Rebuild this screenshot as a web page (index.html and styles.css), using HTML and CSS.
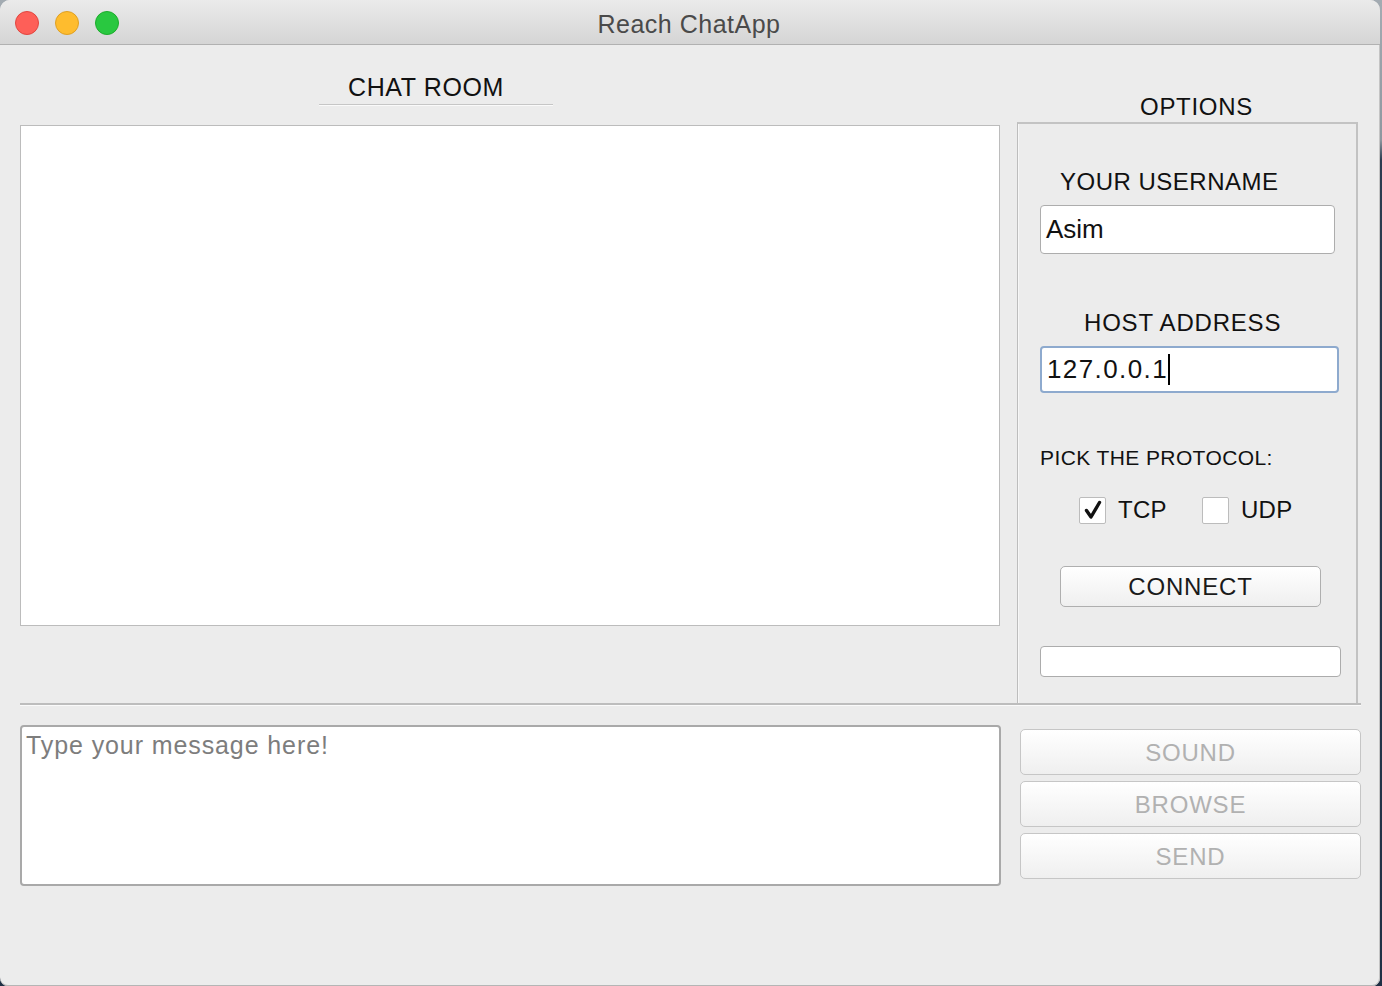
FILE: index.html
```html
<!DOCTYPE html>
<html>
<head>
<meta charset="utf-8">
<link rel="stylesheet" href="styles.css">
<title>Reach ChatApp</title>
</head>
<body>
<div class="window">
  <div class="titlebar">
    <div class="lights">
      <span class="light red"></span>
      <span class="light yellow"></span>
      <span class="light green"></span>
    </div>
    <div class="title">Reach ChatApp</div>
  </div>
  <div class="content">
    <div class="top">
      <div class="chat-col">
        <div class="chat-head"><span>CHAT ROOM</span></div>
        <div class="chat-box"></div>
      </div>
      <div class="opt-col">
        <div class="opt-head">OPTIONS</div>
        <div class="opt-panel">
          <div class="label lbl-user">YOUR USERNAME</div>
          <div class="field user-field">Asim</div>
          <div class="label lbl-host">HOST ADDRESS</div>
          <div class="field host-field">127.0.0.1<span class="caret"></span></div>
          <div class="label-sm">PICK THE PROTOCOL:</div>
          <div class="protos">
            <label class="proto"><span class="cb checked"><svg width="20" height="20" viewBox="0 0 20 20"><path d="M3.5 10.5 L8 17 L16.5 2.5" fill="none" stroke="#111" stroke-width="3.4" stroke-linejoin="round" stroke-linecap="round"/></svg></span>TCP</label>
            <label class="proto"><span class="cb"></span>UDP</label>
          </div>
          <button class="btn connect">CONNECT</button>
          <div class="status"></div>
        </div>
      </div>
    </div>
    <div class="separator"></div>
    <div class="bottom">
      <div class="msg">Type your message here!</div>
      <div class="actions">
        <button class="btn dis">SOUND</button>
        <button class="btn dis">BROWSE</button>
        <button class="btn dis">SEND</button>
      </div>
    </div>
  </div>
</div>
</body>
</html>
```
FILE: styles.css
```css
* { box-sizing: border-box; }
html, body {
  margin: 0;
  padding: 0;
  height: 986px;
  overflow: hidden;
}
body {
  background: linear-gradient(#a3abb2 0, #8e979f 140px, #2b3c50 160px, #1f3045 100%);
  font-family: "Liberation Sans", Arial, sans-serif;
  color: #111;
}
.window {
  width: 1380px;
  height: 986px;
  background: #ececec;
  border-radius: 10px 10px 8px 8px;
  overflow: hidden;
  display: flex;
  flex-direction: column;
  box-shadow: inset -1px 0 0 #c4c4c4, inset 0 -1px 0 #b5b5b5;
}
.titlebar {
  height: 45px;
  flex: none;
  background: linear-gradient(#ebebeb, #d5d5d5);
  border-bottom: 1px solid #b1b1b1;
  position: relative;
  display: flex;
  align-items: center;
  justify-content: center;
}
.lights {
  position: absolute;
  left: 15px;
  top: 11px;
  display: flex;
  gap: 16px;
}
.light {
  width: 24px;
  height: 24px;
  border-radius: 50%;
  display: block;
}
.red { background: #fe5f58; border: 1px solid #e1463f; }
.yellow { background: #febc2e; border: 1px solid #dfa023; }
.green { background: #29c840; border: 1px solid #1dac2c; }
.title {
  font-size: 25px;
  color: #4a4a4a;
  margin-left: -2px;
  margin-top: 4px;
  letter-spacing: 0.5px;
}
.content {
  padding-left: 20px;
  display: flex;
  flex-direction: column;
}
.top {
  display: flex;
  height: 658px;
}
.chat-col {
  width: 980px;
  display: flex;
  flex-direction: column;
}
.chat-head {
  margin-top: 25px;
  margin-left: 299px;
  width: 234px;
  height: 35px;
  padding-right: 20px;
  text-align: center;
  border-bottom: 1px solid #c6c6c6;
  box-shadow: 0 1px 0 #fafafa;
  font-size: 25px;
  line-height: 34px;
  letter-spacing: 0.6px;
}
.chat-box {
  margin-top: 20px;
  height: 501px;
  background: #fff;
  border: 1px solid #bcbcbc;
}
.opt-col {
  margin-left: 17px;
  width: 343px;
  display: flex;
  flex-direction: column;
}
.opt-head {
  height: 77px;
  padding-left: 16px;
  display: flex;
  align-items: flex-end;
  justify-content: center;
  font-size: 24px;
  line-height: 30px;
  letter-spacing: 0.7px;
}
.opt-panel {
  flex: 1;
  width: 341px;
  border-top: 2px solid #c3c3c3;
  border-left: 1px solid #bdbdbd;
  border-right: 2px solid #c2c2c2;
  box-shadow: inset 1px 0 0 #f7f7f7;
  display: flex;
  flex-direction: column;
  align-items: flex-start;
}
.label {
  font-size: 24px;
  line-height: 30px;
}
.lbl-user { margin-top: 43px; margin-left: 42px; letter-spacing: 0.5px; }
.lbl-host { margin-top: 54px; margin-left: 66px; letter-spacing: 0.8px; }
.field {
  margin-top: 8px;
  margin-left: 22px;
  background: #fff;
  border: 1px solid #adadad;
  border-radius: 4px;
  font-size: 26px;
  padding-left: 5px;
  display: flex;
  align-items: center;
}
.user-field { width: 295px; height: 49px; }
.host-field {
  width: 299px;
  height: 47px;
  border: 2px solid #8eaace;
  padding-left: 5px;
  letter-spacing: 1.4px;
}
.caret {
  display: inline-block;
  width: 2px;
  height: 31px;
  background: #000;
  margin-left: 0;
}
.label-sm {
  margin-top: 51px;
  margin-left: 22px;
  font-size: 21px;
  line-height: 28px;
  letter-spacing: 0.4px;
}
.protos {
  margin-top: 23px;
  margin-left: 61px;
  display: flex;
  gap: 35px;
  height: 30px;
  align-items: center;
}
.proto {
  display: flex;
  align-items: center;
  gap: 12px;
  font-size: 24px;
  letter-spacing: 0.3px;
}
.cb {
  width: 27px;
  height: 27px;
  background: #fff;
  border: 1px solid #bcbcbc;
  border-radius: 2px;
  display: flex;
  align-items: center;
  justify-content: center;
}
.btn {
  font-family: "Liberation Sans", Arial, sans-serif;
  background: linear-gradient(#ffffff, #efefef);
  border: 1px solid #afafaf;
  border-radius: 5px;
  font-size: 24px;
  color: #1a1a1a;
  padding: 0;
  display: block;
  letter-spacing: 0.8px;
}
.connect {
  margin-top: 41px;
  margin-left: 42px;
  width: 261px;
  height: 41px;
}
.status {
  margin-top: 39px;
  margin-left: 22px;
  width: 301px;
  height: 31px;
  background: #fff;
  border: 1px solid #acacac;
  border-radius: 4px;
}
.separator {
  width: 1341px;
  height: 2px;
  border-top: 2px solid #bdbdbd;
  box-shadow: 0 1px 0 #fafafa;
}
.bottom {
  display: flex;
  margin-top: 20px;
}
.msg {
  width: 981px;
  height: 161px;
  background: #fff;
  border: 2px solid #a9a9a9;
  border-radius: 4px;
  font-size: 25px;
  color: #7d7d7d;
  padding: 3px 4px;
  line-height: 30px;
  letter-spacing: 0.9px;
}
.actions {
  margin-left: 19px;
  margin-top: 4px;
  display: flex;
  flex-direction: column;
  gap: 6px;
}
.btn.dis {
  width: 341px;
  height: 46px;
  color: #b1b1b1;
  border-color: #c6c6c6;
  padding-top: 2px;
}
```
